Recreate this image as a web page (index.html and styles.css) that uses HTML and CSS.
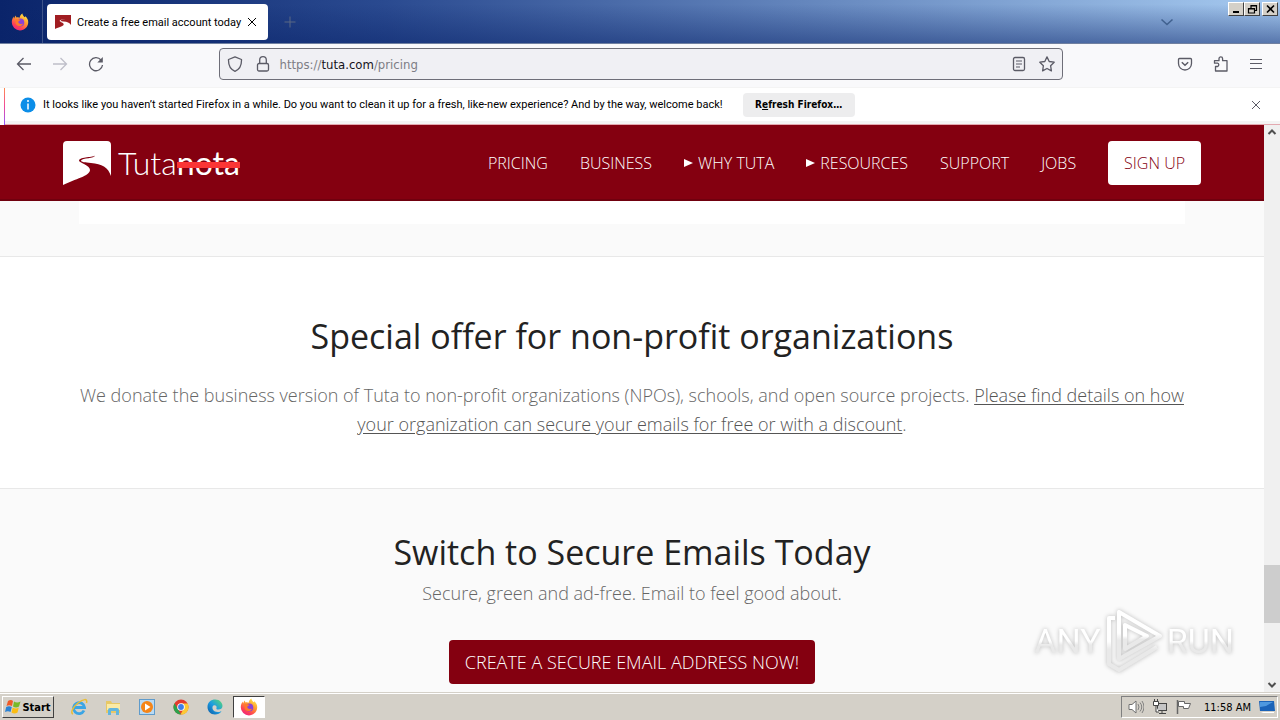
FILE: index.html
```html
<!DOCTYPE html>
<html lang="en">
<head>
    <meta charset="UTF-8">
    <meta name="viewport" content="width=device-width, initial-scale=1.0">
    <title>Create a free email account today</title>
    <link rel="stylesheet" href="styles.css">
</head>
<body>
    <svg class="defs" width="0" height="0" aria-hidden="true">
        <defs>
            <linearGradient id="fox-body" x1="0.8" y1="0" x2="0.2" y2="1">
                <stop offset="0" stop-color="#fff04a"/>
                <stop offset="0.4" stop-color="#ff9a2e"/>
                <stop offset="0.75" stop-color="#ff4055"/>
                <stop offset="1" stop-color="#e8208a"/>
            </linearGradient>
            <linearGradient id="edge-body" x1="0" y1="1" x2="1" y2="0">
                <stop offset="0" stop-color="#0c59a4"/>
                <stop offset="0.5" stop-color="#1b9de2"/>
                <stop offset="1" stop-color="#5fdc6c"/>
            </linearGradient>
            <linearGradient id="mark-fade" x1="0" y1="0" x2="0" y2="1">
                <stop offset="0.45" stop-color="#fff"/>
                <stop offset="0.6" stop-color="#e9e9e9"/>
            </linearGradient>
            <symbol id="firefox" viewBox="0 0 16 16">
                <path d="M8 15.5A7.3 7.3 0 0 1 .7 8.200C.7 6 1.500 4.500 2.300 3.200L2.700 4.800 4 2.300 4.900 4C6 3.600 7 3.800 7.700 4.200 7.800 2.600 8.800 1.100 10.200.4 10.200 2 11.200 2.700 12.200 3.700L12.900 2.900C14.600 4.600 15.400 6.400 15.300 8.500 15.200 12.400 12 15.500 8 15.500Z" fill="url(#fox-body)"/>
                <circle cx="8.300" cy="8.400" r="3.500" fill="#8a42d8"/>
                <path d="M4 5.500C6 4.900 7.200 5.700 8.700 6.200 7.500 6.900 6.600 7.100 6.400 8.100 6.800 9.700 8.800 10.300 10.700 9.300 9.800 12.300 5.500 12.500 4.200 9.600Z" fill="#ff7a2a"/>
            </symbol>
            <symbol id="close" viewBox="0 0 10 10">
                <path d="M1 1 9 9M9 1 1 9" fill="none" stroke="currentColor"/>
            </symbol>
        </defs>
    </svg>

    <div class="titlebar">
        <button class="fox-button" aria-label="Firefox View">
            <svg width="18" height="18"><use href="#firefox"/></svg>
        </button>
        <div class="tab">
            <svg width="16" height="16" viewBox="0 0 16 16">
                <path d="M0 1H16V11Q14 7.500 8.500 7.500 6 7.400 5.700 6.700 5.600 6 10.500 5.500 5 5.400 4.600 6.700C4.800 8 8.800 8.500 8.700 10.500 8.200 12.500 4 13 0 15Z" fill="#a01d22"/>
            </svg>
            <span class="tab-title">Create a free email account today</span>
            <button class="tab-close" aria-label="Close tab"><svg width="10" height="10"><use href="#close"/></svg></button>
        </div>
        <button class="new-tab" aria-label="New tab">
            <svg width="12" height="12" viewBox="0 0 12 12"><path d="M6 .5V11.500M.5 6H11.500" stroke="#5b6884"/></svg>
        </button>
        <button class="all-tabs" aria-label="List all tabs">
            <svg width="14" height="8" viewBox="0 0 14 8"><path d="M1.500 1.500 7 6.500 12.500 1.500" fill="none" stroke="#41618f" stroke-width="1.600"/></svg>
        </button>
        <div class="window-buttons">
            <button class="win-button" aria-label="Minimize">
                <svg width="11" height="10" viewBox="0 0 11 10"><path d="M2 8H8" stroke="#000" stroke-width="2"/></svg>
            </button>
            <button class="win-button" aria-label="Restore">
                <svg width="11" height="10" viewBox="0 0 11 10"><path d="M4 4V1.500H9.500V6.500H7.500M1.500 4.500H7.500V9H1.500ZM4 2H10M1 5H8" fill="none" stroke="#000" stroke-width="1.200"/></svg>
            </button>
            <button class="win-button win-close" aria-label="Close">
                <svg width="11" height="10" viewBox="0 0 11 10"><path d="M2 1.500 9 8.500M9 1.500 2 8.500" stroke="#000" stroke-width="1.600"/></svg>
            </button>
        </div>
    </div>

    <div class="toolbar">
        <div class="nav-buttons">
            <button aria-label="Back">
                <svg width="16" height="16" viewBox="0 0 16 16"><path d="M15 8H1.500M7.500 2 1.500 8 7.500 14" fill="none" stroke="#5b5b66" stroke-width="1.300"/></svg>
            </button>
            <button aria-label="Forward" disabled>
                <svg width="16" height="16" viewBox="0 0 16 16"><path d="M1 8H14.500M8.500 2 14.500 8 8.500 14" fill="none" stroke="#bfbfc9" stroke-width="1.300"/></svg>
            </button>
            <button aria-label="Reload">
                <svg width="16" height="16" viewBox="0 0 16 16"><path d="M13 4A6.500 6.500 0 1 0 14.500 9" fill="none" stroke="#5b5b66" stroke-width="1.300"/><path d="M14.800 1V6.500H9.300Z" fill="#5b5b66"/></svg>
            </button>
        </div>
        <form class="urlbar">
            <svg width="16" height="16" viewBox="0 0 16 16"><path d="M8 .8 14.500 3.500C14.700 9 12.500 13.500 8 15.300 3.500 13.500 1.300 9 1.500 3.500Z" fill="none" stroke="#5b5b66" stroke-width="1.300" stroke-linejoin="round"/></svg>
            <svg width="16" height="16" viewBox="0 0 16 16"><rect x="2.500" y="7.500" width="11" height="7.500" rx="1.500" fill="none" stroke="#5b5b66" stroke-width="1.300"/><path d="M4.700 7.500V4A3.300 3.300 0 0 1 11.300 4V7.500" fill="none" stroke="#5b5b66" stroke-width="1.300"/></svg>
            <div class="address" contenteditable="true" role="textbox" aria-label="Address">https://<b>tuta.com</b>/pricing</div>
            <button type="button" aria-label="Reader view">
                <svg width="16" height="16" viewBox="0 0 16 16"><rect x="2.500" y="1.500" width="11" height="13" rx="1.500" fill="none" stroke="#5b5b66" stroke-width="1.300"/><path d="M5 5H11M5 8H11M5 11H9" stroke="#5b5b66"/></svg>
            </button>
            <button type="button" aria-label="Bookmark">
                <svg width="16" height="16" viewBox="0 0 16 16"><path d="M8 .9 10.200 5.500 15.200 6.200 11.600 9.700 12.400 14.900 8 12.500 3.600 14.900 4.400 9.700.8 6.200 5.800 5.500Z" fill="none" stroke="#5b5b66" stroke-width="1.300" stroke-linejoin="round"/></svg>
            </button>
        </form>
        <div class="tool-buttons">
            <button aria-label="Save to Pocket">
                <svg width="16" height="16" viewBox="0 0 16 16"><path d="M2.500 2.500H13.500Q14.500 2.500 14.500 3.500V7.500A6.500 6.500 0 0 1 1.500 7.500V3.500Q1.500 2.500 2.500 2.500Z" fill="none" stroke="#5b5b66" stroke-width="1.300"/><path d="M4.800 6.200 8 9.200 11.200 6.200" fill="none" stroke="#5b5b66" stroke-width="1.500"/></svg>
            </button>
            <button aria-label="Extensions">
                <svg width="16" height="16" viewBox="0 0 16 16"><path d="M2.500 15V10.500H4.500A1.700 1.700 0 0 0 4.500 7.200H1.500V4.700H6V2.700A1.800 1.800 0 0 1 9.600 2.700V4.700H14V15Z" fill="none" stroke="#5b5b66" stroke-width="1.300" stroke-linejoin="round"/></svg>
            </button>
            <button aria-label="Menu">
                <svg width="14" height="12" viewBox="0 0 14 12"><path d="M1 1.500H13M1 5.500H13M1 10.500H13" stroke="#5b5b66"/></svg>
            </button>
        </div>
    </div>

    <div class="notification">
        <svg width="16" height="16" viewBox="0 0 16 16"><circle cx="8" cy="8" r="7.500" fill="#0c8ee8"/><path d="M8 3V5M8 6.500V12.500" stroke="#fff" stroke-width="1.500"/></svg>
        <span>It looks like you haven’t started Firefox in a while. Do you want to clean it up for a fresh, like-new experience? And by the way, welcome back!</span>
        <button class="refresh">R<u>e</u>fresh Firefox…</button>
        <button class="dismiss" aria-label="Dismiss"><svg width="10" height="10"><use href="#close"/></svg></button>
    </div>

    <div class="viewport">
        <div class="page">
            <header class="site-header">
                <a class="logo" href="#" aria-label="Tutanota">
                    <svg width="48" height="45" viewBox="0 0 48 45">
                        <path d="M0 4Q0 0 4 0H44Q48 0 48 4V35C45 26 39 23 28 22 22 21.500 18 21 18 19.500 19 17 32 17.500 32 14.500 31 16.500 17 15.500 16 19.500 16 22 27 24 27 29C27 35 12 38 0 44Z" fill="#fff"/>
                    </svg>
                    <span class="logo-text">Tuta<span class="struck">nota</span></span>
                </a>
                <nav class="menu">
                    <a href="#">PRICING</a>
                    <a href="#">BUSINESS</a>
                    <button><span class="arrow"></span>WHY TUTA</button>
                    <button><span class="arrow"></span>RESOURCES</button>
                    <a href="#">SUPPORT</a>
                    <a href="#">JOBS</a>
                    <a class="signup" href="#">SIGN UP</a>
                </nav>
            </header>
            <section class="plans">
                <div class="plans-card"></div>
            </section>
            <section class="offer">
                <h2>Special offer for non-profit organizations</h2>
                <p>We donate the business version of Tuta to non-profit organizations (NPOs), schools, and open source projects. <a href="#">Please find details on how your organization can secure your emails for free or with a discount</a>.</p>
            </section>
            <section class="switch">
                <h2>Switch to Secure Emails Today</h2>
                <p>Secure, green and ad-free. Email to feel good about.</p>
                <a class="create" href="#">CREATE A SECURE EMAIL ADDRESS NOW!</a>
            </section>
        </div>
        <div class="scrollbar">
            <svg width="10" height="8" viewBox="0 0 10 8"><path d="M1.500 6 5 2.500 8.500 6" fill="none" stroke="#505050" stroke-width="2"/></svg>
            <div class="track"><div class="thumb"></div></div>
            <svg width="10" height="8" viewBox="0 0 10 8"><path d="M1.500 2 5 5.500 8.500 2" fill="none" stroke="#505050" stroke-width="2"/></svg>
        </div>
        <div class="watermark">
            <span>ANY</span>
            <svg width="58" height="64" viewBox="0 0 58 64">
                <g fill="none" stroke="url(#mark-fade)" stroke-width="4" stroke-linejoin="round">
                    <path d="M14 3V50L55 27Z"/>
                    <path d="M20 16V40L42 27Z"/>
                    <path d="M10 9H4V55L14 61 52 38"/>
                </g>
            </svg>
            <span>RUN</span>
        </div>
    </div>

    <div class="taskbar">
        <button class="start">
            <svg width="16" height="16" viewBox="0 0 16 16">
                <path d="M3 2Q6 0 8 2L7 7Q4 5.500 1.500 7Z" fill="#ef5a28"/>
                <path d="M9 2.500Q12 4.500 15.500 2.500L14 7.500Q11 9.500 8 7.500Z" fill="#78b928"/>
                <path d="M1.200 8Q4 6.500 6.800 8L5.500 13Q3 11.500 0 13Z" fill="#2a82d4"/>
                <path d="M7.700 8.500Q11 10.500 13.800 8.500L12.500 13.500Q9.500 15.500 6.500 13.500Z" fill="#fbbd13"/>
            </svg>
            Start
        </button>
        <div class="launchers">
            <button aria-label="Internet Explorer">
                <svg width="18" height="18" viewBox="0 0 18 18"><path d="M14 12.500A5.500 5.500 0 1 1 14.500 9.500H4" fill="none" stroke="#3aa5e5" stroke-width="2.800"/><path d="M3 16C0 15 3 9 8 5S18 0 16.500 5" fill="none" stroke="#e9bd35" stroke-width="1.500"/></svg>
            </button>
            <button aria-label="Explorer">
                <svg width="18" height="18" viewBox="0 0 18 18"><path d="M2 3H7L8 5H16V15H2Z" fill="#e7c866"/><path d="M3 6H16V12H3Z" fill="#fbeaa5"/><path d="M4 17V12Q4 10 6 10H13Q15 10 15 12V17H12V13H7V17Z" fill="#62b5dd"/></svg>
            </button>
            <button aria-label="Media Player">
                <svg width="18" height="18" viewBox="0 0 18 18"><rect x="1.500" y="1.500" width="15" height="15" fill="#b9daf4" stroke="#5f9bcb"/><circle cx="9" cy="9" r="6" fill="#f58518"/><path d="M7 5.500 12.500 9 7 12.500Z" fill="#fff"/></svg>
            </button>
            <button aria-label="Chrome">
                <svg width="18" height="18" viewBox="0 0 18 18"><circle cx="9" cy="9" r="7.500" fill="#e33b2e"/><path d="M2.500 5.200 9 16.500A7.500 7.500 0 0 1 2.500 5.200Z" fill="#2ba24c"/><path d="M9 5.500H15.700A7.500 7.500 0 0 1 8.500 16.500L12 10Z" fill="#fcc934"/><circle cx="9" cy="9" r="3.800" fill="#fff"/><circle cx="9" cy="9" r="2.900" fill="#3e7ee8"/></svg>
            </button>
            <button aria-label="Edge">
                <svg width="18" height="18" viewBox="0 0 18 18"><path d="M1.500 9C1.500 4 5 1.500 9.300 1.500 14 1.500 16.500 5 16.500 8 16.500 10.500 14.500 11.500 12.500 11.500 10.800 11.500 10 11 10.500 10 11.200 8.500 9.500 6.800 7.500 7.500 5.500 8.500 6 14 12 14 14 14 15 13 15.500 13.300 14 15.500 11.800 16.500 9 16.500 4.500 16.500 1.500 13 1.500 9Z" fill="url(#edge-body)"/></svg>
            </button>
            <button class="active" aria-label="Firefox">
                <svg width="18" height="18"><use href="#firefox"/></svg>
            </button>
        </div>
        <div class="tray">
            <svg width="16" height="16" viewBox="0 0 16 16"><path d="M1 5.500H4L8 2V14L4 10.500H1Z" fill="#fff" stroke="#707070"/><path d="M10 5Q12 8 10 11M12 3.500Q15.500 8 12 12.500M14 2Q18 8 14 14" fill="none" stroke="#808080"/></svg>
            <svg width="16" height="16" viewBox="0 0 16 16"><rect x="5.500" y="4.500" width="9" height="7" fill="#c5c5c5" stroke="#444"/><path d="M7 14.500H14M10 12V14" stroke="#444"/><path d="M1.500 2.500H6.500V6.500H1.500ZM2.500 0V2M5.500 0V2M4 7V13H7" fill="#fff" stroke="#444"/></svg>
            <svg width="16" height="16" viewBox="0 0 16 16"><path d="M1.500 1V15" stroke="#666" stroke-width="1.500"/><path d="M2.500 2.500H8.500V4.500H14.500L12.500 9.500H7.500V7.500H2.500Z" fill="#fff" stroke="#666"/></svg>
            <span class="clock">11:58 AM</span>
            <svg width="16" height="16" viewBox="0 0 16 16"><path d="M0 2H15L16 12H1Z" fill="#1b63b8"/><path d="M1 3H14L7 7 1 8Z" fill="#4e98df"/><path d="M2 13H15V14H4Z" fill="#fff"/></svg>
        </div>
    </div>
</body>
</html>
```
FILE: styles.css
```css
* {
    box-sizing: border-box;
}
body {
    margin: 0;
    height: 100vh;
    display: flex;
    flex-direction: column;
    overflow: hidden;
    font-family: "DejaVu Sans Condensed", sans-serif;
    font-size: 11px;
    color: #000;
}
button {
    display: flex;
    align-items: center;
    justify-content: center;
    padding: 0;
    border: none;
    background: none;
    color: inherit;
    font: inherit;
}
svg {
    flex-shrink: 0;
}
.defs {
    position: absolute;
}

/* Browser tabs */
.titlebar {
    flex: 0 0 44px;
    display: flex;
    align-items: center;
    background: linear-gradient(rgba(10, 36, 106, 0) 10%, rgba(10, 36, 106, 0.5) 100%), linear-gradient(90deg, #0a246a, #2a4a90 30%, #a6caf0);
    border-bottom: 1px solid #7080a0;
}
.fox-button {
    width: 43px;
    height: 43px;
    padding-right: 2px;
    border-right: 1px solid #3d5389;
}
.tab {
    display: flex;
    align-items: center;
    width: 221px;
    height: 36px;
    margin-left: 4px;
    padding: 0 8px;
    border-radius: 4px;
    background: #fff;
}
.tab-title {
    flex: 1;
    margin-left: 6px;
    padding-top: 2px;
    font-family: Roboto, sans-serif;
    white-space: nowrap;
}
.tab-close {
    width: 16px;
    height: 16px;
}
.new-tab {
    width: 16px;
    margin-left: 14px;
}
.all-tabs {
    margin-left: auto;
    margin-right: 54px;
}
.window-buttons {
    display: flex;
    align-self: flex-start;
    margin: 2px 2px 0 0;
}
.win-button {
    width: 16px;
    height: 14px;
    background: #d4d0c8;
    border: 1px solid;
    border-color: #fff #404040 #404040 #fff;
}
.win-close {
    margin-left: 2px;
}

/* Address bar */
.toolbar {
    flex: 0 0 44px;
    display: flex;
    align-items: center;
    justify-content: space-between;
    padding: 0 17px 3px 16px;
    background: #f9f9fb;
    border-bottom: 1px solid #f4f4f4;
}
.nav-buttons,
.tool-buttons {
    display: flex;
    gap: 20px;
}
.urlbar {
    flex: 0 1 844px;
    display: flex;
    align-items: center;
    gap: 12px;
    height: 32px;
    padding: 0 7px;
    border: 1px solid #6e6e78;
    border-radius: 4px;
    background: #f0f0f4;
}
.address {
    flex: 1;
    margin-left: -3px;
    font-size: 13px;
    color: #7d7d84;
}
.address b {
    font-weight: 400;
    color: #15141a;
}

.notification {
    flex: 0 0 37px;
    display: flex;
    align-items: center;
    margin-left: 4px;
    padding: 0 19px 4px 15px;
    background: #fff;
    border-left: 1px solid;
    border-image: linear-gradient(#ff8a50, #f0489a, #9059ff) 0 0 0 1;
    white-space: nowrap;
    box-shadow: inset 0 -1px #e3a9b0, inset 0 -4px #f4f4f4;
}
.notification span {
    margin-left: 7px;
    font-family: Roboto, sans-serif;
}
.refresh {
    width: 112px;
    height: 24px;
    margin-left: 20px;
    border-radius: 4px;
    background: #ededee;
    font-size: 10px;
    font-weight: 700;
}
.dismiss {
    margin-left: auto;
    color: #5b5b66;
}

/* Web page */
.viewport {
    position: relative;
    flex: 1;
    display: flex;
    min-height: 0;
}
.page {
    flex: 1;
    display: flex;
    flex-direction: column;
    overflow: hidden;
    background: #fafafa;
    font-family: "Open Sans", sans-serif;
    font-weight: 300;
    text-align: center;
}
.site-header {
    flex: 0 0 76px;
    display: flex;
    align-items: center;
    justify-content: space-between;
    padding: 2px 63px 0;
    background: #840010;
    border-bottom: 2px solid #70000e;
}
.logo {
    display: flex;
    align-items: center;
    gap: 7px;
    color: #fff;
    text-decoration: none;
}
.logo-text {
    font-family: Lato, sans-serif;
    font-size: 32px;
    font-weight: 300;
    line-height: 44px;
}
.struck {
    position: relative;
    font-weight: 400;
}
/* red bar across the old half of the name */
.struck::after {
    content: "";
    position: absolute;
    left: 0;
    right: 0;
    top: 19px;
    height: 6px;
    background: #fb3535;
}
.menu {
    display: flex;
    align-items: center;
    gap: 32px;
    font-size: 16px;
}
.menu a,
.menu button {
    color: #fff;
    text-decoration: none;
}
.arrow {
    margin-right: 5px;
    border-left: 9px solid #fff;
    border-top: 4px solid transparent;
    border-bottom: 4px solid transparent;
}
.menu .signup {
    padding: 0 16px;
    border-radius: 4px;
    background: #fff;
    color: #840010;
    line-height: 44px;
}
.plans {
    padding: 0 79px 32px;
    border-bottom: 1px solid #e8e8e8;
}
.plans-card {
    height: 23px;
    background: #fff;
}
.offer {
    padding: 55px 79px 49px;
    background: #fff;
    border-bottom: 1px solid #e8e8e8;
}
h2 {
    margin: 0;
    color: #222;
    font-size: 34px;
    font-weight: 400;
    line-height: 48px;
}
.page p {
    margin: 0;
    color: #666;
    font-size: 18px;
    line-height: 29px;
}
.page .offer p {
    margin-top: 21px;
}
.offer a {
    color: #555;
    text-underline-offset: 2px;
}
.switch {
    padding-top: 39px;
}
.switch p {
    margin-top: 3px;
}
.create {
    display: inline-block;
    margin-top: 32px;
    padding: 0 16px;
    border-radius: 4px;
    background: #840010;
    color: #fff;
    font-size: 18px;
    line-height: 44px;
    text-decoration: none;
}
.scrollbar {
    flex: 0 0 16px;
    display: flex;
    flex-direction: column;
    align-items: center;
    padding: 3px 0;
    background: #f0f0f0;
}
.track {
    flex: 1;
    display: flex;
    flex-direction: column;
    justify-content: flex-end;
    width: 100%;
    padding-bottom: 58px;
}
.thumb {
    height: 58px;
    background: #cdcdcd;
}
.watermark {
    position: absolute;
    right: 46px;
    bottom: 19px;
    display: flex;
    align-items: center;
    gap: 4px;
    font-family: Roboto, sans-serif;
    font-size: 34px;
    filter: drop-shadow(0 0 2px #bbb);
}
.watermark span {
    background: linear-gradient(#fff 50%, #e9e9e9 60%);
    background-clip: text;
    color: transparent;
}

/* Windows taskbar */
.taskbar {
    flex: 0 0 28px;
    display: flex;
    align-items: center;
    padding: 1px 2px 0;
    background: #d4d0c8;
    border-top: 1px solid #d4d0c8;
    box-shadow: inset 0 1px #fff;
}
.start {
    gap: 1px;
    width: 52px;
    height: 22px;
    border: 1px solid;
    border-color: #fff #404040 #404040 #fff;
    font-weight: 700;
}
.launchers {
    display: flex;
    margin-left: 8px;
}
.launchers button {
    width: 34px;
    height: 22px;
}
.launchers .active {
    width: 32px;
    margin-left: 1px;
    background: #fff;
    border: 1px solid;
    border-color: #404040 #fff #fff #404040;
}
.tray {
    display: flex;
    align-items: center;
    gap: 8px;
    height: 22px;
    margin-left: auto;
    padding: 0 2px 0 6px;
    border: 1px solid;
    border-color: #808080 #fff #fff #808080;
}
.clock {
    margin-left: 4px;
}
```
